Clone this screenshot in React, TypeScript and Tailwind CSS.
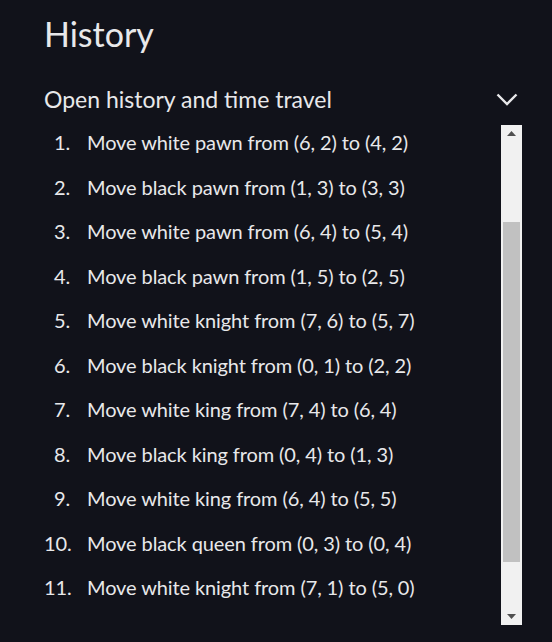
import React from "react";

const moves = [
  "Move white pawn from (6, 2) to (4, 2)",
  "Move black pawn from (1, 3) to (3, 3)",
  "Move white pawn from (6, 4) to (5, 4)",
  "Move black pawn from (1, 5) to (2, 5)",
  "Move white knight from (7, 6) to (5, 7)",
  "Move black knight from (0, 1) to (2, 2)",
  "Move white king from (7, 4) to (6, 4)",
  "Move black king from (0, 4) to (1, 3)",
  "Move white king from (6, 4) to (5, 5)",
  "Move black queen from (0, 3) to (0, 4)",
  "Move white knight from (7, 1) to (5, 0)",
  "Move white bishop from (7, 5) to (4, 2) check",
];

export default function App() {
  return (
    <div
      className="h-[642px] w-[552px] overflow-hidden bg-[#11121a] text-[#e8e8ea] pl-[44px] pr-[30px] pt-[14px]"
      style={{ fontFamily: "Lato, 'Noto Sans', sans-serif" }}
    >
      <h1 className="text-[34px] leading-[40px] font-normal">History</h1>
      <div className="mt-[31px] flex items-center justify-between h-[28px]">
        <span className="text-[23px] leading-[28px]">Open history and time travel</span>
        <svg width="22" height="13" viewBox="0 0 22 13" className="mr-[4px]">
          <polyline points="1.5,1.5 11,11 20.5,1.5" fill="none" stroke="#e8e8ea" strokeWidth="2.4" />
        </svg>
      </div>
      <div className="mt-[12px] flex h-[500px]">
        <div className="flex-1 overflow-hidden">
          <div className="mt-[-5px] flex flex-col">
            {moves.map((m, i) => (
              <div key={i} className="flex h-[44.5px] items-center text-[20px] leading-[28px] whitespace-nowrap tracking-[-0.1px]">
                <span className="w-[26px] text-right">{i + 1}.</span>
                <span className="ml-[17px]">{m}</span>
              </div>
            ))}
          </div>
        </div>
        <div className="w-[21px] bg-[#f1f1f1] flex flex-col">
          <div className="h-[17px] flex items-center justify-center">
            <svg width="9" height="5" viewBox="0 0 9 5">
              <polygon points="4.5,0 9,5 0,5" fill="#505050" />
            </svg>
          </div>
          <div className="flex-1 pt-[80px] px-[2px]">
            <div className="h-[340px] bg-[#c1c1c1]" />
          </div>
          <div className="h-[17px] flex items-center justify-center">
            <svg width="9" height="5" viewBox="0 0 9 5">
              <polygon points="0,0 9,0 4.5,5" fill="#505050" />
            </svg>
          </div>
        </div>
      </div>
    </div>
  );
}
